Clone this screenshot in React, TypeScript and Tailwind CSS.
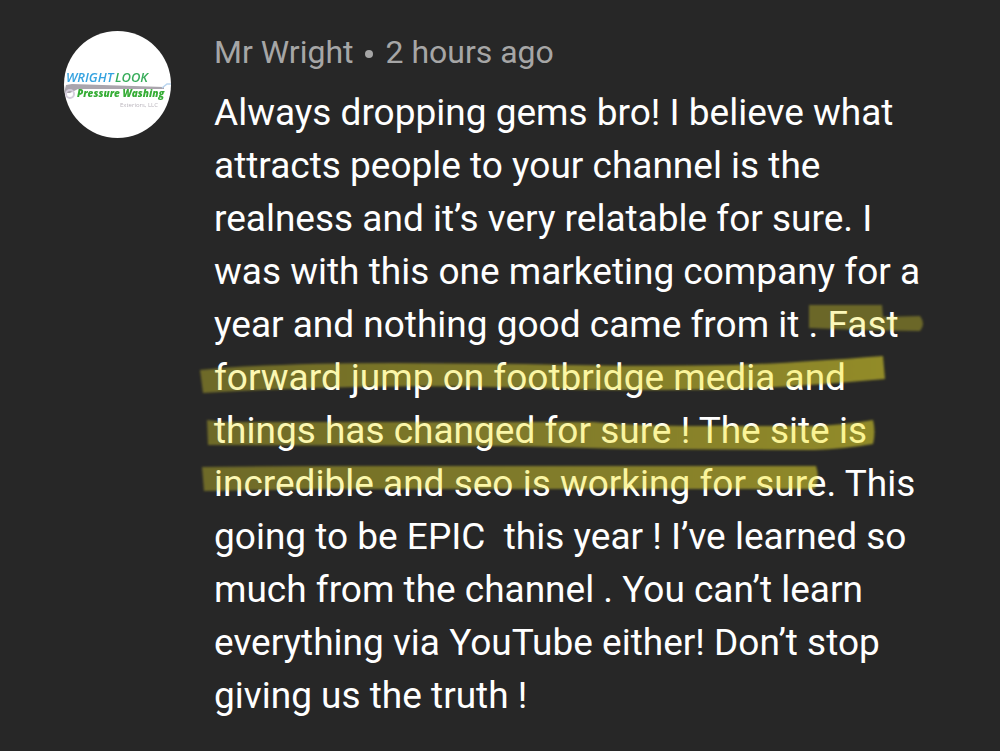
const COMMENT_LINES = [
  'Always dropping gems bro! I believe what',
  'attracts people to your channel is the',
  'realness and it’s very relatable for sure. I',
  'was with this one marketing company for a',
  'year and nothing good came from it . Fast',
  'forward jump on footbridge media and',
  'things has changed for sure ! The site is',
  'incredible and seo is working for sure. This',
  'going to be EPIC  this year ! I’ve learned so',
  'much from the channel . You can’t learn',
  'everything via YouTube either! Don’t stop',
  'giving us the truth !',
];

function Avatar() {
  return (
    <svg
      viewBox="0 0 107 107"
      role="img"
      aria-label="Wrightlook Pressure Washing"
      className="size-[107px] shrink-0 rounded-full bg-white font-['Open_Sans',sans-serif]"
    >
      <defs>
        <filter id="logo-soft">
          <feGaussianBlur stdDeviation="0.7" />
        </filter>
      </defs>
      <g filter="url(#logo-soft)">
        <path d="M2 54 L8 53 L100 56 L100 58 L14 58 L6 62 L0 62 Z" fill="#aaa5ad" />
        <path d="M98 57 L103 53 L107 53" stroke="#b9d5f0" strokeWidth="1.5" fill="none" />
        <circle cx="6" cy="63" r="4" fill="none" stroke="#d5cddd" strokeWidth="2" />
        <text x="2" y="51" fontSize="13" fontWeight="600" fontStyle="italic" fill="#36a3e0">
          WRIGHT
        </text>
        <text x="51" y="51" fontSize="13" fontWeight="600" fontStyle="italic" fill="#39ad5b">
          LOOK
        </text>
        <text x="13" y="66" fontSize="10" fontWeight="800" fontStyle="italic" fill="#36ad36">
          Pressure Washing
        </text>
        <text x="56" y="76" fontSize="6" fill="#b9b4bc">
          Exteriors, LLC
        </text>
      </g>
    </svg>
  );
}

// Marker strokes drawn over lines five to eight of the comment
function MarkerStrokes() {
  return (
    <svg
      viewBox="0 0 740 200"
      aria-hidden="true"
      className="pointer-events-none absolute -left-5 top-[213px] h-[200px] w-[740px]"
    >
      <defs>
        <linearGradient id="marker" gradientUnits="userSpaceOnUse" x1="0" y1="0" x2="700" y2="0">
          <stop offset="0" stopColor="#f6e92c" stopOpacity="0.34" />
          <stop offset="0.3" stopColor="#f6e92c" stopOpacity="0.4" />
          <stop offset="1" stopColor="#f6e92c" stopOpacity="0.52" />
        </linearGradient>
        <filter id="marker-soft">
          <feGaussianBlur stdDeviation="1.2" />
        </filter>
      </defs>
      <g fill="url(#marker)" filter="url(#marker-soft)">
        <path
          d="M615 6 L688 6 L689 18 L726 17 Q732 25 726 32 L666 31 L615 29 Z"
          fill="#f6e92c"
          fillOpacity="0.33"
        />
        <path d="M6 71 Q80 64 200 64 L330 65 Q440 68 540 66 Q600 64 689 57 L691 80 Q600 88 540 90 Q440 92 370 90 Q260 86 160 88 Q70 90 9 94 Z" />
        <path d="M13 121 L30 123 L400 123 Q440 127 510 127 L620 127 Q650 126 679 121 Q682 133 679 145 Q650 150 620 151 L430 150 L320 147 L14 146 Z" />
        <path d="M8 168 L130 167 L622 167 Q626 178 621 190 L130 190 L10 192 Z" />
      </g>
    </svg>
  );
}

export default function App() {
  return (
    <main className="min-h-screen bg-[#272727] font-['Roboto',sans-serif] text-white">
      <article className="flex gap-[43px] pl-16 pt-[31px]">
        <Avatar />
        <div className="pt-[3px]">
          <header className="flex items-center text-[32px] leading-9 text-[#a6a6a6]">
            <span>Mr Wright</span>
            <span className="mx-3 mt-1 size-2 rounded-full bg-[#a6a6a6]" />
            <time>2 hours ago</time>
          </header>
          <div className="relative mt-4">
            <p className="whitespace-pre text-[37px] leading-[53px]">{COMMENT_LINES.join('\n')}</p>
            <MarkerStrokes />
          </div>
        </div>
      </article>
    </main>
  );
}
